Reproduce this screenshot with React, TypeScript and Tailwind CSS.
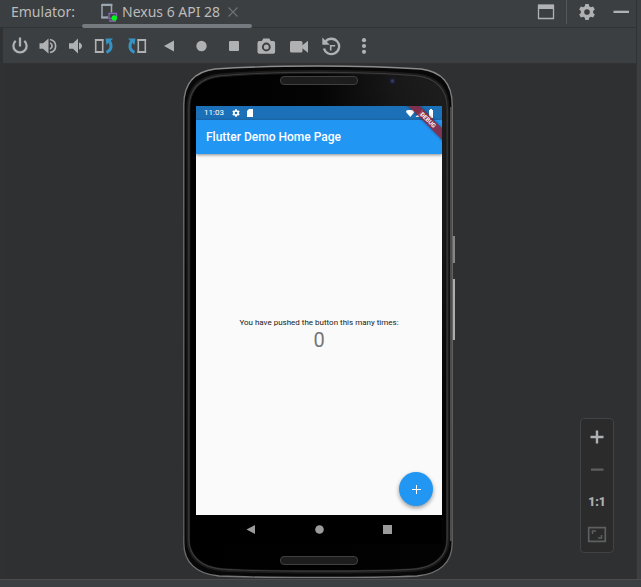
import type { ReactNode } from "react";

type IconButtonProps = { label: string; className?: string; children: ReactNode };

function IconButton({ label, className = "", children }: IconButtonProps) {
  return (
    <button type="button" aria-label={label} className={`flex h-7 items-center justify-center ${className}`}>
      {children}
    </button>
  );
}

function Glyph({ children, className = "" }: { children: ReactNode; className?: string }) {
  return (
    <svg viewBox="0 0 20 20" fill="none" aria-hidden="true" className={`size-5 shrink-0 text-[#afb1b3] ${className}`}>
      {children}
    </svg>
  );
}

const GEAR =
  "M8 .5h4l.6 2.700 1.900 1.100 2.700-.8 2 3.500-2 1.900v2.200l2 1.900-2 3.500-2.700-.8-1.900 1.100-.6 2.700H8l-.6-2.700-1.900-1.100-2.700.8-2-3.500 2-1.900V8.900l-2-1.900 2-3.500 2.700.8 1.900-1.100zM10 6.700a3.300 3.300 0 1 0 0 6.600 3.300 3.300 0 0 0 0-6.600z";

function Header() {
  return (
    <header className="flex h-7 items-start border-b border-[#323232] bg-[#3c3f41] text-sm leading-6 text-[#bbbbbb]">
      <span className="w-[82px] shrink-0 pl-[11px]">Emulator:</span>
      <div className="flex h-7 w-[170px] shrink-0 flex-col">
        <div className="flex h-6 items-center whitespace-nowrap pl-[18px]">
          <svg viewBox="0 0 18 20" className="mr-1 h-5 w-[18px] shrink-0" fill="none" aria-hidden="true">
            <path d="M2 2.500h9.500v8M2 2.500v13h6" stroke="#9aa7b0" strokeWidth="1.500" />
            <path d="M1.300 14.500H8v2H1.300zM1.300 2h11v2h-11z" fill="#9aa7b0" />
            <path d="M9 11.500h7.500v5H9zM9 19h7" stroke="#8a65b5" strokeWidth="1.300" />
            <circle cx="14.300" cy="16" r="2.700" fill="#00f51d" />
          </svg>
          <span>Nexus 6 API 28</span>
          <button type="button" aria-label="Close tab" className="ml-2">
            <svg viewBox="0 0 10 10" className="size-2.5" stroke="#6e7072" strokeWidth="1.200" aria-hidden="true">
              <path d="M.5.5l9 9M9.500.5l-9 9" />
            </svg>
          </button>
        </div>
        <div className="h-1 rounded-full bg-[#747a80]" />
      </div>
      <div className="ml-auto flex h-6 items-center">
        <IconButton label="Window" className="w-10">
          <Glyph>
            <path d="M2.500 3.500h15v13h-15z" stroke="currentColor" strokeWidth="1.300" />
            <path d="M2 2.500h16V7H2z" fill="currentColor" />
          </Glyph>
        </IconButton>
        <span className="h-6 w-px bg-[#555759]" />
        <IconButton label="Settings" className="w-10">
          <Glyph>
            <path transform="translate(1.500 1.500) scale(.85)" d={GEAR} fill="currentColor" fillRule="evenodd" />
          </Glyph>
        </IconButton>
        <IconButton label="Hide" className="w-[29px] justify-start pl-1">
          <Glyph>
            <path d="M2.500 8.700h15.500v2.300H2.500z" fill="currentColor" />
          </Glyph>
        </IconButton>
      </div>
    </header>
  );
}

function Toolbar() {
  return (
    <div role="toolbar" aria-label="Emulator controls" className="flex h-9 items-center border-b border-[#323232] bg-[#3c3f41] pl-[3px]">
      <IconButton label="Power" className="w-7">
        <Glyph>
          <path d="M5.700 4.800a6.600 6.600 0 1 0 8.600 0M10 1.500v9" stroke="currentColor" strokeWidth="2.300" />
        </Glyph>
      </IconButton>
      <IconButton label="Volume up" className="w-7">
        <Glyph>
          <path d="M1.500 7.200h3.500L10.500 2.500v15L5 12.800H1.500z" fill="currentColor" />
          <path d="M12 7a3.200 3.200 0 0 1 0 6M12 3.500c7.500 1.500 7.500 11.500 0 13" stroke="currentColor" strokeWidth="1.700" />
        </Glyph>
      </IconButton>
      <IconButton label="Volume down" className="w-7">
        <Glyph>
          <path d="M3 7.200h4L12 2.500v15L7 12.800H3z" fill="currentColor" />
          <path d="M13 6.500c4 1.200 4 5.800 0 7z" fill="currentColor" />
        </Glyph>
      </IconButton>
      <div className="flex w-[288px] shrink-0 justify-between">
        <IconButton label="Rotate left" className="w-7">
          <Glyph>
            <path d="M1.700 3.700h7v12.600h-7z" stroke="currentColor" strokeWidth="1.600" />
            <path d="M.9 3h8.600v2H.9zM.9 15h8.600v2H.9z" fill="currentColor" />
            <path d="M12.500 16.500c5.500-2.500 5.500-7.500 3-11.500" stroke="#3592c4" strokeWidth="3" />
            <path d="M11.500 2.500H19L12.500 9z" fill="#3592c4" />
          </Glyph>
        </IconButton>
        <IconButton label="Rotate right" className="w-7">
          <Glyph>
            <path d="M11.300 3.700h7v12.600h-7z" stroke="currentColor" strokeWidth="1.600" />
            <path d="M10.500 3h8.600v2h-8.600zM10.500 15h8.600v2h-8.600z" fill="currentColor" />
            <path d="M7.500 16.500c-5.500-2.500-5.500-7.500-3-11.500" stroke="#3592c4" strokeWidth="3" />
            <path d="M8.500 2.500H1L7.500 9z" fill="#3592c4" />
          </Glyph>
        </IconButton>
        <IconButton label="Back" className="w-7">
          <Glyph>
            <path d="M15 4.500v11L5 10z" fill="currentColor" />
          </Glyph>
        </IconButton>
        <IconButton label="Home" className="w-7">
          <Glyph>
            <circle cx="9.500" cy="10" r="5.200" fill="currentColor" />
          </Glyph>
        </IconButton>
        <IconButton label="Overview" className="w-7">
          <Glyph>
            <rect x="5" y="5" width="10" height="10" rx="1" fill="currentColor" />
          </Glyph>
        </IconButton>
        <IconButton label="Take screenshot" className="w-7">
          <Glyph>
            <path fillRule="evenodd" d="M6.300 2.500h6L13.800 5h2.500a1.800 1.800 0 0 1 1.800 1.800V16a1.800 1.800 0 0 1-1.800 1.800h-14A1.800 1.800 0 0 1 .5 16V6.800A1.800 1.800 0 0 1 2.300 5h2.500zM9.300 6.600a4.400 4.400 0 1 0 0 8.800 4.400 4.400 0 0 0 0-8.800z" fill="currentColor" />
            <circle cx="9.300" cy="11" r="2.500" fill="currentColor" />
          </Glyph>
        </IconButton>
        <IconButton label="Record screen" className="w-7">
          <Glyph>
            <rect x="1" y="5" width="12.500" height="11.500" rx="1.500" fill="currentColor" />
            <path d="M13 9.500l6-4.700v12L13 12z" fill="currentColor" />
          </Glyph>
        </IconButton>
        <IconButton label="Snapshots" className="w-7">
          <Glyph>
            <path d="M3.500 5.500A7.700 7.700 0 1 1 2 12.500" stroke="currentColor" strokeWidth="2.300" />
            <path d="M.3 1.500v7.200H7.800z" fill="currentColor" />
            <path d="M8.700 14.500V9.700h4.500" stroke="currentColor" strokeWidth="1.600" />
          </Glyph>
        </IconButton>
        <IconButton label="More" className="w-7">
          <Glyph>
            <circle cx="10" cy="4.200" r="2.100" fill="currentColor" />
            <circle cx="10" cy="10" r="2.100" fill="currentColor" />
            <circle cx="10" cy="15.800" r="2.100" fill="currentColor" />
          </Glyph>
        </IconButton>
      </div>
    </div>
  );
}

const SHELL =
  "M.8 40C.8 22 8 7 32 4C70 1.500 100 1 135 1S200 1.500 238 4C262 7 269.200 22 269.200 40V478C269.200 497 257 509 234 511C200 512.500 170 512.500 135 512.500S70 512.500 36 511C13 509 .8 497 .8 478Z";
const INNER =
  "M7 44C7 27 15 15 36 12C70 9 100 8.500 135 8.500S200 9 234 12C255 15 263 27 263 44V474C263 490 252 501 231 503C200 505 170 505 135 505S70 505 39 503C18 501 7 490 7 474Z";

/** Nexus 6 body: metal rim, bezel, speakers, camera and side keys. */
function PhoneShell() {
  return (
    <svg viewBox="0 0 273 513" fill="none" aria-hidden="true" className="absolute left-0 top-0 h-[513px] w-[273px]">
      <defs>
        <linearGradient id="rim" x1="0" y1="0" x2="0" y2="1">
          <stop offset="0" stopColor="#8c8c8c" />
          <stop offset=".1" stopColor="#747474" />
          <stop offset=".9" stopColor="#606060" />
          <stop offset="1" stopColor="#777777" />
        </linearGradient>
        <linearGradient id="bezel" x1="0" y1="0" x2="1" y2="0">
          <stop offset="0" stopColor="#000000" />
          <stop offset=".5" stopColor="#040404" />
          <stop offset=".8" stopColor="#181818" />
          <stop offset="1" stopColor="#1e1e1e" />
        </linearGradient>
        <linearGradient id="fade" x1="0" y1="0" x2="0" y2="1">
          <stop offset="0" stopColor="#000000" stopOpacity="0" />
          <stop offset=".3" stopColor="#000000" stopOpacity=".2" />
          <stop offset=".7" stopColor="#000000" stopOpacity=".9" />
        </linearGradient>
      </defs>
      <path d="M269.500 171h2.500v27h-2.500z" fill="#858585" />
      <path d="M269.500 214h2.500v61h-2.500z" fill="#adadad" />
      <path d={SHELL} fill="#080808" stroke="url(#rim)" strokeWidth="1.300" />
      <path d={INNER} stroke="#1c1c1c" strokeWidth="7" />
      <path d={INNER} stroke="#3a3a3a" strokeWidth="3.500" />
      <path d={INNER} fill="url(#bezel)" stroke="#181818" strokeWidth="1" />
      <path d={INNER} fill="url(#fade)" />
      <path d="M268 42v434" stroke="#4c4c4c" strokeWidth="2" />
      <rect x="97.500" y="11.500" width="77" height="8" rx="3.500" fill="#1d1d1d" stroke="#404040" />
      <rect x="97.500" y="491.500" width="77" height="8" rx="3.500" fill="#1d1d1d" stroke="#404040" />
      <circle cx="209.500" cy="16" r="3.300" fill="#1a1c30" />
      <circle cx="209.500" cy="16" r="1.700" fill="#343a62" />
    </svg>
  );
}

function StatusBar() {
  return (
    <div className="flex h-3.5 items-center bg-[#1c70b7] px-2 text-[8px] leading-3 text-white">
      <span>11:03</span>
      <svg viewBox="0 0 20 20" className="ml-2 size-2" fill="currentColor" aria-hidden="true">
        <path d={GEAR} fillRule="evenodd" />
      </svg>
      <svg viewBox="0 0 8 8" className="ml-1.5 size-2" fill="currentColor" aria-hidden="true">
        <path d="M3 0h4v8H1V2z" />
      </svg>
      <svg viewBox="0 0 28 9" className="ml-auto h-[9px] w-7" fill="currentColor" aria-hidden="true">
        <path d="M0 3Q0 1 2 1H6.500Q8.500 1 8.500 3L4.300 8zM17 0v8H9.500zM23 1h1V0h2v1h1v8h-4z" />
      </svg>
    </div>
  );
}

function NavBar() {
  return (
    <div className="flex h-[29px] items-center justify-center gap-[57px] bg-black text-[#9b9b9b]">
      {[
        { label: "Back", shape: <path d="M9 1v9L.5 5.500z" /> },
        { label: "Home", shape: <circle cx="5.500" cy="5.500" r="4.300" /> },
        { label: "Recents", shape: <rect x="1" y="1" width="9" height="9" /> },
      ].map(({ label, shape }) => (
        <button key={label} type="button" aria-label={label}>
          <svg viewBox="0 0 11 11" className="size-[11px]" fill="currentColor" aria-hidden="true">
            {shape}
          </svg>
        </button>
      ))}
    </div>
  );
}

function Phone() {
  return (
    <div className="relative w-[273px] pb-[34px] pl-[13px] pr-[14px] pt-[41px] font-[Roboto,sans-serif]">
      <PhoneShell />
      <div className="relative overflow-hidden">
        <StatusBar />
        <div className="relative z-10 flex h-[34px] items-center bg-[#2196f3] pl-2.5 shadow-[0_1px_3px_rgba(0,0,0,0.45)]">
          <h1 className="text-xs font-medium text-white">Flutter Demo Home Page</h1>
        </div>
        <main className="flex h-[361px] flex-col bg-[#fafafa]">
          <div className="flex flex-1 flex-col items-center pt-[163px]">
            <p className="whitespace-nowrap text-[8px] leading-3 text-[#202020]">You have pushed the button this many times:</p>
            <p className="text-xl leading-[22px] text-[#757575]">0</p>
          </div>
          <button
            type="button"
            aria-label="Increment"
            className="mb-[9px] mr-[9px] flex size-[34px] items-center justify-center self-end rounded-full bg-[#2196f3] shadow-[0_2px_4px_rgba(0,0,0,0.4)]"
          >
            <svg viewBox="0 0 9 9" className="size-[9px]" fill="#ffffff" aria-hidden="true">
              <path d="M4 0h1v4h4v1H5v4H4V5H0V4h4z" />
            </svg>
          </button>
        </main>
        <NavBar />
        <div className="absolute -right-4 top-2.5 z-20 h-2 w-[60px] rotate-45 bg-[#8f2338]/85 text-center text-[6px] font-bold leading-2 text-white shadow-[0_0_3px_rgba(0,0,0,0.4)]">
          DEBUG
        </div>
      </div>
    </div>
  );
}

function ZoomControls() {
  return (
    <div className="absolute bottom-[26px] right-[22px] flex h-[135px] w-[34px] flex-col items-center justify-between rounded border border-[#414243] bg-[#2b2b2b] py-1">
      <IconButton label="Zoom in" className="w-7">
        <Glyph>
          <path d="M10 3.500v13M3.500 10h13" stroke="currentColor" strokeWidth="2.400" />
        </Glyph>
      </IconButton>
      <IconButton label="Zoom out" className="w-7">
        <Glyph>
          <path d="M4 9.500h12.500v2.200H4z" fill="#5e5f60" />
        </Glyph>
      </IconButton>
      <button type="button" aria-label="Zoom to actual size" className="h-7 font-[Roboto,sans-serif] text-xs font-black text-[#afb1b3]">
        1:1
      </button>
      <IconButton label="Zoom to fit" className="w-7">
        <Glyph>
          <path d="M1.700 3.700h16.600v13.600H1.700z" stroke="#5e5f60" strokeWidth="1.700" />
          <path d="M5.500 10V7H9M14.500 11v3H11" stroke="#5e5f60" strokeWidth="1.500" />
        </Glyph>
      </IconButton>
    </div>
  );
}

export default function App() {
  return (
    <div className="flex min-h-screen flex-col bg-[#3c3f41] font-['Noto_Sans',sans-serif]">
      <div className="flex flex-1">
        <div className="flex min-w-0 flex-1 flex-col">
          <Header />
          <div className="flex flex-1 flex-col border-l-3 border-[#303132]">
            <Toolbar />
            <section aria-label="Device" className="relative flex flex-1 justify-center bg-[#2f3032] pb-px pt-px">
              <Phone />
              <ZoomControls />
            </section>
          </div>
        </div>
        <div className="w-[5px] border-l border-[#323232] bg-[#3c3f41]" />
      </div>
      <footer className="h-2 border-t border-[#4a4c4e] bg-[#3c3f41]" />
    </div>
  );
}
